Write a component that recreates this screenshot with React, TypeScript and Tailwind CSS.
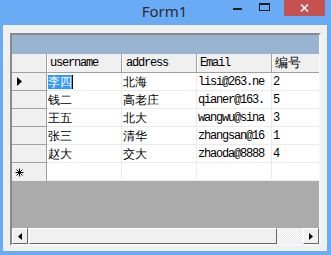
import * as React from "react"

const rows = [
  { name: "李四", addr: "北海", email: "lisi@263.ne", id: "2", current: true },
  { name: "钱二", addr: "高老庄", email: "qianer@163.", id: "5" },
  { name: "王五", addr: "北大", email: "wangwu@sina", id: "3" },
  { name: "张三", addr: "清华", email: "zhangsan@16", id: "1" },
  { name: "赵大", addr: "交大", email: "zhaoda@8888", id: "4" },
]

const cjk = "font-sans text-[12px]"
const mono = "font-mono text-[12px] tracking-[-1.2px]"

function HeaderCell({ children, className }: { children?: React.ReactNode; className?: string }) {
  return (
    <div
      className={`h-full shrink-0 overflow-hidden whitespace-nowrap border-r border-r-[#a0a0a0] border-l border-l-white pl-[2px] flex items-center text-black ${className ?? ""}`}
    >
      {children}
    </div>
  )
}

function Cell({ children, className }: { children?: React.ReactNode; className?: string }) {
  return (
    <div
      className={`h-full shrink-0 overflow-hidden whitespace-nowrap border-r border-r-[#ebebeb] pl-[1px] flex items-center text-black bg-white ${className ?? ""}`}
    >
      {children}
    </div>
  )
}

export default function App() {
  return (
    <div className="w-[331px] h-[255px] bg-[#6aabf5] flex flex-col overflow-hidden select-none font-sans">
      {/* title bar */}
      <div className="relative h-[25px] shrink-0 flex items-center justify-center">
        <span className="text-[15px] text-[#2b2b2b] -mt-[2px] ml-[-2px]">Form1</span>
        <div className="absolute top-0 right-[6px] flex items-start">
          <div className="w-[26px] h-[16px] flex items-center justify-center mr-[1px]">
            <div className="w-[9px] h-[2px] bg-[#1e1e1e] mt-[1px]" />
          </div>
          <div className="w-[26px] h-[16px] flex items-center justify-center mr-[7px]">
            <div className="w-[11px] h-[8px] border border-[#1e1e1e] border-t-2 -mt-[2px]" />
          </div>
          <div className="w-[41px] h-[16px] bg-[#c75050] flex items-center justify-center">
            <svg width="9" height="8" viewBox="0 0 9 8">
              <path d="M1 0.5 L8 7.5 M8 0.5 L1 7.5" stroke="#ffffff" strokeWidth="1.6" />
            </svg>
          </div>
        </div>
      </div>

      {/* client area */}
      <div className="ml-[3px] mr-[4px] mb-[4px] flex-1 bg-[#f0f0f0] pt-[8px] pl-[7px]">
        <div className="w-[311px] h-[213px] border-2 border-t-[#8a8a8a] border-l-[#8a8a8a] border-r-[#f8f8f8] border-b-[#f8f8f8] flex flex-col overflow-hidden">
          {/* caption */}
          <div className="h-[19px] shrink-0 bg-[#99b4d1]" />

          {/* column headers */}
          <div className={`h-[19px] shrink-0 flex bg-[#f0f0f0] border-b border-[#a0a0a0] ${mono}`}>
            <HeaderCell className="w-[35px] border-l-0" />
            <HeaderCell className="w-[75px]">username</HeaderCell>
            <HeaderCell className="w-[75px] pl-[3px]">address</HeaderCell>
            <HeaderCell className="w-[75px]">Email</HeaderCell>
            <HeaderCell className="flex-1 border-r-0 font-sans tracking-normal text-[13px]">编号</HeaderCell>
          </div>

          {/* rows */}
          {rows.map((r) => (
            <div key={r.name} className="h-[18px] shrink-0 flex border-b border-[#ebebeb]">
              <div className="w-[35px] h-[18px] -mb-px shrink-0 bg-[#f0f0f0] border-r border-b border-[#a0a0a0] flex items-center pl-[5px]">
                {r.current && (
                  <svg width="5" height="9" viewBox="0 0 5 9">
                    <path d="M0 0 L5 4.5 L0 9 Z" fill="#000" />
                  </svg>
                )}
              </div>
              <Cell className={`w-[75px] ${cjk}`}>
                {r.current ? (
                  <span className="flex items-center h-[14px]">
                    <span className="bg-[#3399ff] text-white h-[14px] flex items-center leading-none">{r.name}</span>
                    <span className="w-px h-[14px] bg-black" />
                  </span>
                ) : (
                  r.name
                )}
              </Cell>
              <Cell className={`w-[75px] ${cjk}`}>{r.addr}</Cell>
              <Cell className={`w-[75px] ${mono}`}>{r.email}</Cell>
              <Cell className={`flex-1 border-r-0 ${mono}`}>{r.id}</Cell>
            </div>
          ))}

          {/* new row */}
          <div className="h-[18px] shrink-0 flex">
            <div className="w-[35px] shrink-0 bg-[#f0f0f0] border-r border-[#a0a0a0] flex items-center pl-[3px]">
              <svg width="9" height="9" viewBox="0 0 9 9">
                <path d="M4.5 0.5 V8.5 M0.5 4.5 H8.5 M1.5 1.5 L7.5 7.5 M7.5 1.5 L1.5 7.5" stroke="#000" strokeWidth="1" />
              </svg>
            </div>
            <Cell className="w-[75px] border-b border-b-[#ebebeb]" />
            <Cell className="w-[75px] border-b border-b-[#ebebeb]" />
            <Cell className="w-[75px] border-b border-b-[#ebebeb]" />
            <Cell className="flex-1 border-r-0 border-b border-b-[#ebebeb]" />
          </div>

          {/* empty area */}
          <div className="flex-1 bg-[#ababab]" />

          {/* horizontal scrollbar */}
          <div className="h-[16px] shrink-0 flex bg-[#f0f0f0]">
            <div className="w-[16px] h-full border border-t-white border-l-white border-r-[#696969] border-b-[#696969] bg-[#f0f0f0] flex items-center justify-center">
              <svg width="4" height="7" viewBox="0 0 4 7">
                <path d="M4 0 L0 3.5 L4 7 Z" fill="#000" />
              </svg>
            </div>
            <div className="w-[248px] h-full ml-px border border-t-white border-l-white border-r-[#696969] border-b-[#696969] bg-[#f0f0f0]" />
            <div className="flex-1 h-full bg-[image:repeating-conic-gradient(#ffffff_0_25%,#e8e8e8_0_50%)] bg-[length:2px_2px]" />
            <div className="w-[16px] h-full border border-t-white border-l-white border-r-[#696969] border-b-[#696969] bg-[#f0f0f0] flex items-center justify-center">
              <svg width="4" height="7" viewBox="0 0 4 7">
                <path d="M0 0 L4 3.5 L0 7 Z" fill="#000" />
              </svg>
            </div>
          </div>
        </div>
      </div>
    </div>
  )
}
